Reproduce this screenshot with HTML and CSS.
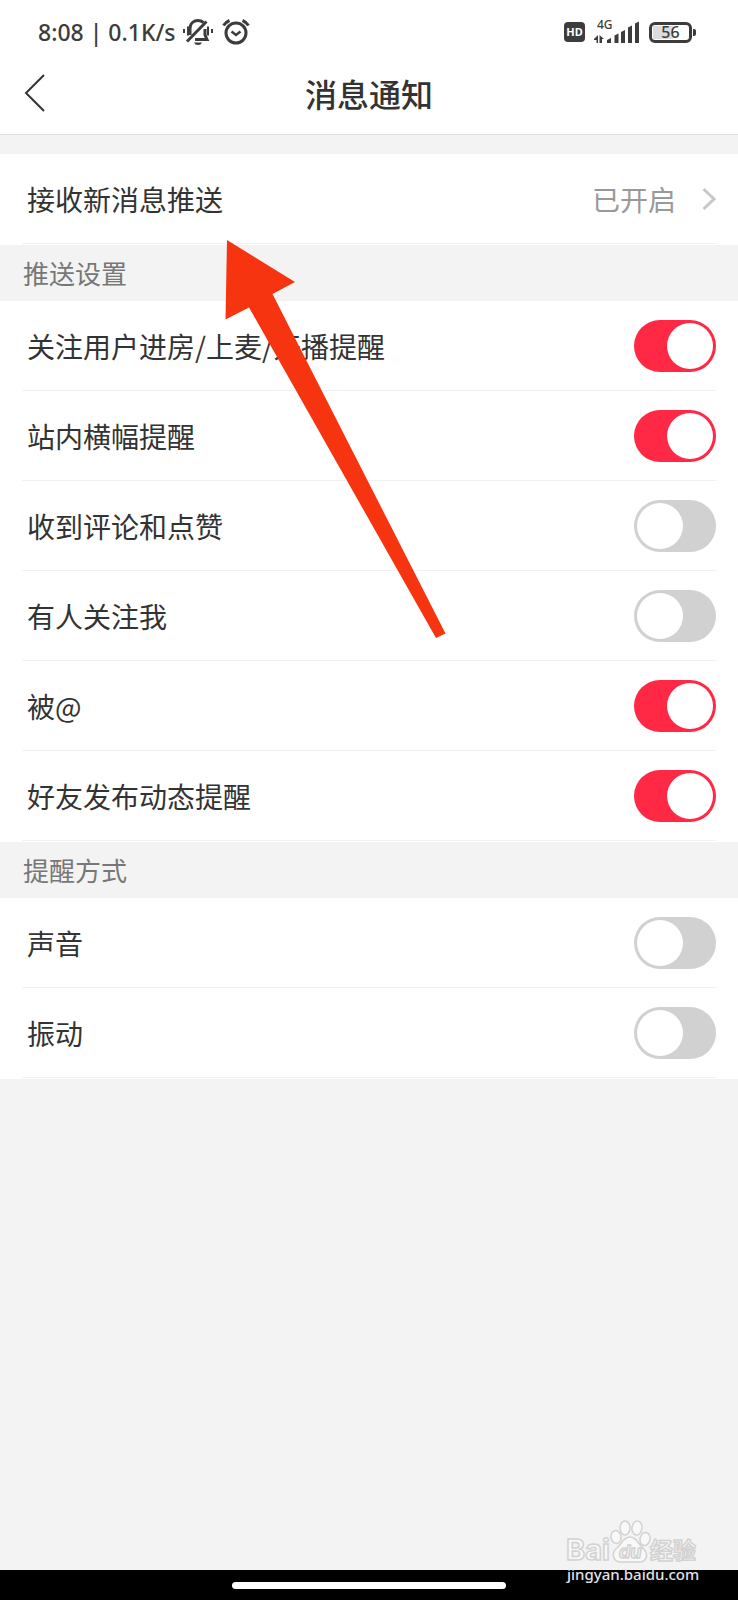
FILE: index.html
```html
<!DOCTYPE html>
<html lang="zh-CN">
<head>
<meta charset="utf-8">
<meta name="viewport" content="width=device-width, initial-scale=1">
<title>消息通知</title>
<link rel="stylesheet" href="styles.css">
</head>
<body>
<div class="screen">
  <header class="top">
    <div class="status">
      <span class="status-text">8:08 | 0.1K/s</span>
      <svg class="bell" width="32" height="28" viewBox="0 0 32 28" fill="none" stroke="#3c3c3c" aria-hidden="true">
        <path d="M2 11v4M6 8.500v9M26 8.500v9M30 11v4" stroke-width="2"/>
        <path d="M8 17V11C8 5 12 2.500 16 2.500c2.500 0 4 .8 5.500 2M23 11v6l2 4.500H13" stroke-width="3"/>
        <path d="M5 23.500L24.500 3.500" stroke-width="3"/>
        <path d="M12 24.500h8q-1 2.500-4 2.500t-4-2.500z" fill="#3c3c3c" stroke="none"/>
      </svg>
      <svg class="alarm" width="28" height="28" viewBox="0 0 28 28" fill="none" stroke="#3c3c3c" aria-hidden="true">
        <circle cx="14" cy="15" r="10" stroke-width="3"/>
        <path d="M9.500 13.500l4.500 3.500 4.500-3.500" stroke-width="2.500"/>
        <path d="M1.500 7.500Q4 4 7.500 2.500M26.500 7.500Q24 4 20.500 2.500" stroke-width="3"/>
      </svg>
      <span class="spacer"></span>
      <span class="hd">HD</span>
      <span class="signal">
        <span class="net">4G</span>
        <svg width="46" height="24" viewBox="0 0 46 24" fill="#3c3c3c" aria-hidden="true">
          <path d="M0 19l4-4v8H2.500v-3H0zM5.500 15l4.500 4H8v4H5.500z"/>
          <path d="M13 20l4-2v5h-4zM20.500 15.500l4-2V23h-4zM27 12l4-2v13h-4zM34 7.500l4-2V23h-4zM41 3.500l4-2V23h-4z"/>
        </svg>
      </span>
      <span class="battery"><span class="cell">56</span></span>
    </div>
    <div class="navbar">
      <button class="back" type="button" aria-label="返回">
        <svg width="22" height="40" viewBox="0 0 22 40" fill="none" stroke="#333" stroke-width="2" aria-hidden="true"><path d="M20 2L2 20l18 18"/></svg>
      </button>
      <h1 class="title">消息通知</h1>
    </div>
  </header>

  <main class="content">
    <ul class="list">
      <li><a class="row" href="#push"><span class="label">接收新消息推送</span><span class="value">已开启</span>
        <svg width="14" height="24" viewBox="0 0 14 24" fill="none" stroke="#c8c8c8" stroke-width="3" aria-hidden="true"><path d="M1.500 2L12 12 1.500 22"/></svg></a></li>
    </ul>

    <h2 class="section">推送设置</h2>
    <ul class="list">
      <li><label class="row"><span class="label">关注用户进房/上麦/开播提醒</span><input class="switch" type="checkbox" checked></label></li>
      <li><label class="row"><span class="label">站内横幅提醒</span><input class="switch" type="checkbox" checked></label></li>
      <li><label class="row"><span class="label">收到评论和点赞</span><input class="switch" type="checkbox"></label></li>
      <li><label class="row"><span class="label">有人关注我</span><input class="switch" type="checkbox"></label></li>
      <li><label class="row"><span class="label">被@</span><input class="switch" type="checkbox" checked></label></li>
      <li><label class="row"><span class="label">好友发布动态提醒</span><input class="switch" type="checkbox" checked></label></li>
    </ul>

    <h2 class="section">提醒方式</h2>
    <ul class="list">
      <li><label class="row"><span class="label">声音</span><input class="switch" type="checkbox"></label></li>
      <li><label class="row"><span class="label">振动</span><input class="switch" type="checkbox"></label></li>
    </ul>
  </main>

  <footer class="gesture"><span class="handle"></span></footer>

  <svg class="arrow" width="222" height="400" viewBox="0 0 222 400" aria-hidden="true">
    <path d="M2 0l68 42-22.500 12L220.500 393.500l-9.500 4.500L24 67.500.5 79.500z" fill="#f63510"/>
  </svg>

  <svg class="watermark" width="140" height="72" viewBox="0 0 140 72">
    <g fill="#f8f8f8" stroke="#d2d2d2" stroke-width="1.500">
      <text class="brand" x="3" y="42">Bai</text>
      <ellipse cx="53" cy="19" rx="5" ry="6.500" transform="rotate(-12 53 19)"/>
      <ellipse cx="62" cy="10" rx="5" ry="7"/>
      <ellipse cx="74" cy="10" rx="5" ry="7" transform="rotate(8 74 10)"/>
      <ellipse cx="82" cy="21" rx="5" ry="6.500" transform="rotate(15 82 21)"/>
      <path d="M67 19c-6 0-8 6-12 10-4 3-6 7-4 11 2 5 7 4 16 4s14 1 16-4c2-4-1-8-4-11-4-4-6-10-12-10z"/>
      <text class="du" x="56" y="40">du</text>
      <text class="cn" x="87" y="41">经验</text>
    </g>
    <text class="url" x="4" y="62">jingyan.baidu.com</text>
  </svg>
</div>
</body>
</html>
```
FILE: styles.css
```css
* { box-sizing: border-box; }

body {
  margin: 0;
  background: #f3f3f3;
  color: #333;
  font-family: "Noto Sans CJK SC", sans-serif;
}

.screen {
  position: relative;
  display: flex;
  flex-direction: column;
  min-height: 100vh;
}

.top {
  background: #fff;
  border-bottom: 1px solid #dedede;
}

/* status bar */
.status {
  display: flex;
  align-items: center;
  height: 64px;
  padding: 0 46px 0 38px;
  color: #3c3c3c;
  font-family: "Noto Sans", sans-serif;
  font-weight: 500;
}
.status-text { font-size: 23px; line-height: 32px; white-space: nowrap; }
.bell { margin-left: 6px; }
.alarm { margin-left: 8px; }
.spacer { flex: 1; }
.hd {
  width: 21px;
  border-radius: 4px;
  background: #3c3c3c;
  color: #fff;
  font-size: 11px;
  font-weight: 700;
  line-height: 20px;
  text-align: center;
}
.signal { position: relative; display: flex; margin-left: 9px; }
.net { position: absolute; left: 3px; top: -2px; font-size: 12px; line-height: 14px; }
.battery {
  position: relative;
  width: 43px;
  margin-left: 9px;
  padding: 1px;
  border: 3px solid #3c3c3c;
  border-radius: 6px;
}
.battery::after {
  content: "";
  position: absolute;
  right: -7px;
  top: 4px;
  width: 3px;
  height: 7px;
  border-radius: 0 2px 2px 0;
  background: #3c3c3c;
}
.cell {
  display: block;
  background: linear-gradient(90deg, #dcdcdc 56%, #fff 56%);
  font-size: 16px;
  line-height: 13px;
  text-align: center;
}

/* title bar */
.navbar {
  display: grid;
  grid-template-columns: 64px 1fr 64px;
  align-items: center;
  height: 70px;
  padding-bottom: 12px;
}
.back {
  display: flex;
  padding: 0 0 0 24px;
  border: 0;
  background: none;
}
.title {
  margin: 0;
  font-size: 32px;
  font-weight: 500;
  line-height: 48px;
  text-align: center;
}

/* settings */
.content { flex: 1; padding-top: 19px; }
.list {
  margin: 0;
  padding: 0 22px 1px;
  background: #fff;
  list-style: none;
}
.row {
  display: flex;
  align-items: center;
  height: 90px;
  padding-left: 5px;
  border-bottom: 1px solid #f1f1f1;
  color: inherit;
  font-size: 28px;
  line-height: 40px;
  text-decoration: none;
}
.label { flex: 1; }
.value { margin-right: 26px; color: #999; }
.section {
  margin: 0;
  padding: 0 23px;
  color: #777;
  font-size: 26px;
  font-weight: 400;
  line-height: 56px;
}

.switch {
  appearance: none;
  width: 82px;
  height: 52px;
  margin: 0;
  padding: 3px;
  border-radius: 26px;
  background: #d1d1d1;
}
.switch::before {
  content: "";
  display: block;
  width: 46px;
  height: 46px;
  border-radius: 50%;
  background: #fff;
}
.switch:checked { background: #ff2946; }
.switch:checked::before { margin-left: auto; }

/* gesture bar */
.gesture {
  display: flex;
  align-items: center;
  justify-content: center;
  height: 30px;
  background: #000;
}
.handle {
  width: 37%;
  height: 7px;
  border-radius: 4px;
  background: #fff;
}

/* overlays */
.arrow { position: absolute; left: 225px; top: 240px; pointer-events: none; }
.watermark { position: absolute; right: 35px; bottom: 10px; pointer-events: none; }
.brand, .du { font-family: Inter, sans-serif; font-weight: 700; }
.brand { font-size: 29px; }
.du { font-size: 18px; font-style: italic; }
.cn { font-size: 23px; font-weight: 700; }
.url {
  fill: #e2e2e2;
  font-family: "Noto Sans", sans-serif;
  font-size: 15px;
  font-weight: 500;
}
```
